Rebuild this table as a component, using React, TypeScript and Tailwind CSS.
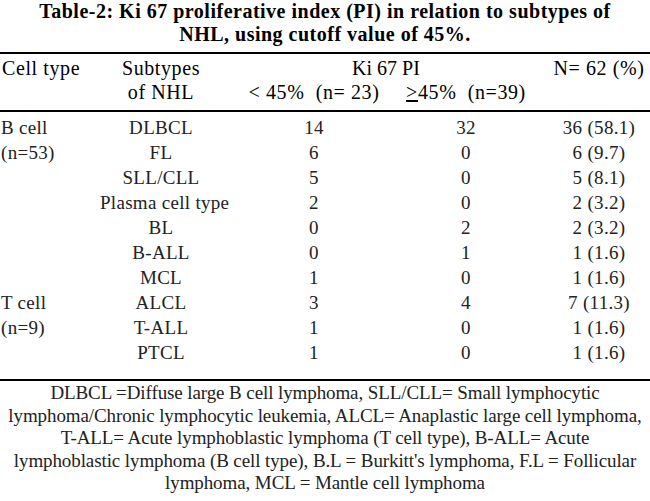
import React from "react";

type Row = { cell?: string; sub: string; lt: string; ge: string; n: string };

const rows: Row[] = [
  { cell: "B cell", sub: "DLBCL", lt: "14", ge: "32", n: "36 (58.1)" },
  { cell: "(n=53)", sub: "FL", lt: "6", ge: "0", n: "6 (9.7)" },
  { sub: "SLL/CLL", lt: "5", ge: "0", n: "5 (8.1)" },
  { sub: "Plasma cell type", lt: "2", ge: "0", n: "2 (3.2)" },
  { sub: "BL", lt: "0", ge: "2", n: "2 (3.2)" },
  { sub: "B-ALL", lt: "0", ge: "1", n: "1 (1.6)" },
  { sub: "MCL", lt: "1", ge: "0", n: "1 (1.6)" },
  { cell: "T cell", sub: "ALCL", lt: "3", ge: "4", n: "7 (11.3)" },
  { cell: "(n=9)", sub: "T-ALL", lt: "1", ge: "0", n: "1 (1.6)" },
  { sub: "PTCL", lt: "1", ge: "0", n: "1 (1.6)" },
];

const footnote = [
  "DLBCL =Diffuse large B cell lymphoma, SLL/CLL= Small lymphocytic",
  "lymphoma/Chronic lymphocytic leukemia, ALCL= Anaplastic large cell lymphoma,",
  "T-ALL= Acute lymphoblastic lymphoma (T cell type), B-ALL= Acute",
  "lymphoblastic lymphoma (B cell type), B.L = Burkitt's lymphoma, F.L = Follicular",
  "lymphoma, MCL = Mantle cell lymphoma",
];

const cols = "grid grid-cols-[100px_122px_184px_120px_1fr]";

export default function App() {
  return (
    <div className="w-[650px] h-[501px] overflow-hidden bg-white text-black font-['Liberation_Serif','Times_New_Roman',serif]">
      {/* Caption */}
      <div className="text-center font-bold text-[20px] tracking-[0.5px] leading-[23px]">
        <div>Table-2: Ki 67 proliferative index (PI) in relation to subtypes of</div>
        <div>NHL, using cutoff value of 45%.</div>
      </div>

      {/* Header */}
      <div className={`${cols} mt-[6px] border-t-2 border-black pt-[2px] pb-[6px] text-[20px] tracking-[0.6px] leading-[24px] whitespace-pre`}>
        <div className="pl-[2px]">Cell type</div>
        <div className="text-center">Subtypes</div>
        <div className="col-span-2 pl-[24px] text-center tracking-normal">Ki 67 PI</div>
        <div className="pl-[22px] text-center">N= 62 (%)</div>

        <div />
        <div className="text-center">of NHL</div>
        <div className="text-center">{"< 45%  (n= 23)"}</div>
        <div className="text-center">
          <span className="underline">&gt;</span>
          {"45%  (n=39)"}
        </div>
        <div />
      </div>

      {/* Body */}
      <div className="border-t-2 border-black pt-[3px] pb-[14px] text-[19px] tracking-[0.3px] leading-[25px] text-[#222]">
        {rows.map((r, i) => (
          <div key={i} className={cols}>
            <div className="pl-[1px]">{r.cell ?? ""}</div>
            <div className="text-center whitespace-nowrap">{r.sub}</div>
            <div className="text-center">{r.lt}</div>
            <div className="text-center">{r.ge}</div>
            <div className="pl-[22px] text-center">{r.n}</div>
          </div>
        ))}
      </div>

      {/* Footnote */}
      <div className="border-t-2 border-black pt-[1px] text-center text-[19px] tracking-[-0.1px] leading-[22.5px] text-[#222]">
        {footnote.map((line, i) => (
          <div key={i} className="whitespace-nowrap">
            {line}
          </div>
        ))}
      </div>
    </div>
  );
}
